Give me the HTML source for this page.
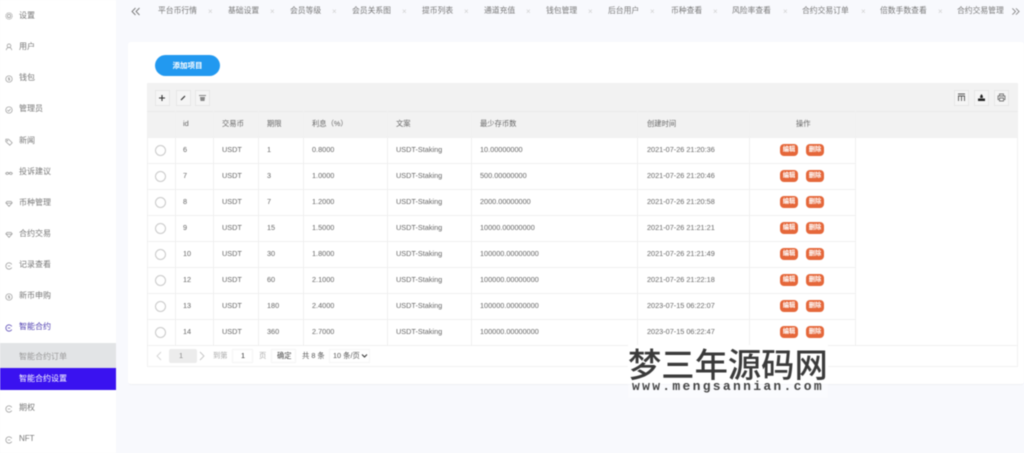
<!DOCTYPE html>
<html><head><meta charset="utf-8">
<style>
html,body{margin:0;padding:0;width:1024px;height:453px;overflow:hidden;background:#f8f9fd}
body{position:relative;font-family:"Liberation Sans","Noto Sans CJK SC",sans-serif;color:#666}
#w{position:absolute;left:0;top:0;width:1024px;height:453px;filter:blur(.4px)}
#w div,#w span,#w svg{position:absolute}
.t{font-size:7.3px;line-height:10px;white-space:nowrap;color:#666;margin-top:1px}
.m{font-size:8px;line-height:10px;white-space:nowrap;color:#777;left:19px}
.i{left:5px;width:8px;height:8px;margin-top:1px}
.tab{font-size:7.8px;line-height:10px;top:6px;white-space:nowrap;color:#777}
.x{font-size:8px;line-height:10px;top:7px;color:#d0d0d0}
.h{background:#f0f0f0;height:1px;left:147px;width:708px}
.v{background:#f0f0f0;width:1px;top:111px;height:234px}
.r{width:9px;height:9px;border:1px solid #c9c9c9;border-radius:50%;left:155px;background:#fff}
.b{background:#e5673a;border-radius:4px;width:18px;height:12px;color:#fff;font-size:6.3px;line-height:12px;text-align:center;font-weight:bold}
.tb{width:13px;height:14px;border:1px solid #e6e6e6;top:90px;background:#f5f5f5;box-sizing:content-box}
</style></head><body><div id="w">

<div style="left:0;top:0;width:116px;height:453px;background:#fff"></div>

<svg class="i" style="top:11px" viewBox="0 0 10 10" fill="none" stroke="#999" stroke-width=".9"><circle cx="5" cy="5" r="2"/><circle cx="5" cy="5" r="4" stroke-dasharray="1.6 .6"/></svg><div class="m" style="top:11px">设置</div>
<svg class="i" style="top:42px" viewBox="0 0 10 10" fill="none" stroke="#999" stroke-width=".9"><circle cx="5" cy="3.500" r="2.300"/><path d="M1.500 9c.3-2.500 1.500-3.300 3.500-3.300S8.200 6.500 8.500 9"/></svg><div class="m" style="top:42px">用户</div>
<svg class="i" style="top:74px" viewBox="0 0 10 10" fill="none" stroke="#999" stroke-width=".9"><circle cx="5" cy="5" r="4"/><path d="M6.200 3.500H4.300v1.500h1.500v1.500H3.900"/></svg><div class="m" style="top:73px">钱包</div>
<svg class="i" style="top:105px" viewBox="0 0 10 10" fill="none" stroke="#999" stroke-width=".9"><circle cx="5" cy="5" r="4"/><path d="M3 5l1.500 1.500L7 3.700"/></svg><div class="m" style="top:104px">管理员</div>
<svg class="i" style="top:137px" viewBox="0 0 10 10" fill="none" stroke="#999" stroke-width=".9"><path d="M1 1.500h3.500L9 6 6 9 1 4.500z"/><circle cx="3" cy="3.300" r=".5"/></svg><div class="m" style="top:136px">新闻</div>
<svg class="i" style="top:168px" viewBox="0 0 10 10" fill="none" stroke="#999" stroke-width="1"><path d="M.8 5.500c1-1.800 2.800-1.800 4.200 0 1.400 1.800 3.200 1.800 4.200 0-1-1.800-2.800-1.800-4.200 0-1.400 1.800-3.200 1.800-4.200 0z"/></svg><div class="m" style="top:167px">投诉建议</div>
<svg class="i" style="top:199px" viewBox="0 0 10 10" fill="none" stroke="#999" stroke-width=".9"><path d="M1 3.500l1.500-1.800h5L9 3.500 5 8z"/><path d="M1 4h8"/></svg><div class="m" style="top:198px">币种管理</div>
<svg class="i" style="top:230px" viewBox="0 0 10 10" fill="none" stroke="#999" stroke-width=".9"><path d="M1 3.500l1.500-1.800h5L9 3.500 5 8z"/><path d="M1 4h8"/></svg><div class="m" style="top:229px">合约交易</div>
<svg class="i" style="top:261px" viewBox="0 0 10 10" fill="none" stroke="#999" stroke-width=".9"><path d="M8.500 3A4 4 0 1 0 8.500 7"/><path d="M3.500 5h3"/></svg><div class="m" style="top:260px">记录查看</div>
<svg class="i" style="top:292px" viewBox="0 0 10 10" fill="none" stroke="#999" stroke-width=".9"><circle cx="5" cy="5" r="4"/><path d="M6.200 3.500H4.300v1.500h1.500v1.500H3.900"/></svg><div class="m" style="top:291px">新币申购</div>
<svg class="i" style="top:323px" viewBox="0 0 10 10" fill="none" stroke="#5a4bb5" stroke-width="1"><path d="M8.500 3A4 4 0 1 0 8.500 7"/><path d="M3.500 5h3"/></svg><div class="m" style="top:322px;color:#4f3fb0">智能合约</div>

<div style="left:0;top:343px;width:116px;height:25px;background:#e2e4e6"></div>
<div style="left:0;top:368px;width:116px;height:22px;background:#3a12f0"></div>
<div class="m" style="top:352px;color:#999">智能合约订单</div>
<div class="m" style="top:374px;color:#fff">智能合约设置</div>

<svg class="i" style="top:404px" viewBox="0 0 10 10" fill="none" stroke="#999" stroke-width=".9"><path d="M8.500 3A4 4 0 1 0 8.500 7"/><path d="M3.500 5h3"/></svg><div class="m" style="top:403px">期权</div>
<svg class="i" style="top:435px" viewBox="0 0 10 10" fill="none" stroke="#999" stroke-width=".9"><path d="M8.500 3A4 4 0 1 0 8.500 7"/><path d="M3.500 5h3"/></svg><div class="m" style="top:434px">NFT</div>

<svg style="left:131px;top:7px;width:10px;height:9px" viewBox="0 0 10 9" fill="none" stroke="#777" stroke-width=".9"><path d="M4.500 1L1 4.500 4.500 8M8.500 1L5 4.500 8.500 8"/></svg>
<div class="tab" style="left:158px">平台币行情</div><div class="x" style="left:208px">×</div>
<div class="tab" style="left:228px">基础设置</div><div class="x" style="left:270px">×</div>
<div class="tab" style="left:290px">会员等级</div><div class="x" style="left:332px">×</div>
<div class="tab" style="left:352px">会员关系图</div><div class="x" style="left:402px">×</div>
<div class="tab" style="left:422px">提币列表</div><div class="x" style="left:464px">×</div>
<div class="tab" style="left:484px">通道充值</div><div class="x" style="left:526px">×</div>
<div class="tab" style="left:546px">钱包管理</div><div class="x" style="left:588px">×</div>
<div class="tab" style="left:608px">后台用户</div><div class="x" style="left:650px">×</div>
<div class="tab" style="left:671px">币种查看</div><div class="x" style="left:713px">×</div>
<div class="tab" style="left:732px">风险率查看</div><div class="x" style="left:783px">×</div>
<div class="tab" style="left:802px">合约交易订单</div><div class="x" style="left:861px">×</div>
<div class="tab" style="left:880px">倍数手数查看</div><div class="x" style="left:938px">×</div>
<div class="tab" style="left:957px">合约交易管理</div>
<svg style="left:1011px;top:7px;width:9px;height:9px" viewBox="0 0 10 9" fill="none" stroke="#777" stroke-width=".9"><path d="M1.500 1L5 4.500 1.500 8M5.500 1L9 4.500 5.500 8"/></svg>

<div style="left:128px;top:42px;width:896px;height:342px;background:#fff;border-radius:3px;border-bottom:1px solid #eff0f4"></div>

<div style="left:155px;top:55px;width:65px;height:21px;border-radius:11px;background:#2299f0;color:#fff;font-size:7.500px;font-weight:bold;line-height:21px;text-align:center">添加项目</div>

<div style="left:147px;top:83px;width:871px;height:54px;background:#f2f2f2"></div>
<div style="left:147px;top:137px;width:871px;height:230px;border:1px solid #f2f2f2;border-top:0;box-sizing:border-box"></div>

<div class="tb" style="left:155px"></div>
<svg style="left:158px;top:94px;width:8px;height:8px" viewBox="0 0 8 8" stroke="#333" stroke-width="1.100"><path d="M4 1v6M1 4h6"/></svg>
<div class="tb" style="left:176px"></div>
<svg style="left:179px;top:94px;width:8px;height:8px" viewBox="0 0 8 8" stroke="#333" stroke-width="1.200"><path d="M2 6L6 2"/></svg>
<div class="tb" style="left:195px"></div>
<svg style="left:198px;top:94px;width:9px;height:8px" viewBox="0 0 9 8" fill="#888"><path d="M1 1h7v1H1zM2 3h5L6.500 7h-4z"/></svg>

<div class="tb" style="left:954px"></div>
<svg style="left:957px;top:93px;width:9px;height:9px" viewBox="0 0 9 9" fill="none" stroke="#555" stroke-width=".9"><path d="M1 1h7M1 3h7M1.500 3v5M4.500 3v5M7.500 3v5"/></svg>
<div class="tb" style="left:974px"></div>
<svg style="left:977px;top:93px;width:9px;height:9px" viewBox="0 0 9 9" fill="#222"><path d="M1 5.500h7V8H1zM3.200 5V3L4.500 1 5.800 3v2z"/></svg>
<div class="tb" style="left:994px"></div>
<svg style="left:997px;top:93px;width:9px;height:9px" viewBox="0 0 9 9" fill="none" stroke="#777" stroke-width=".9"><path d="M2.500 3V1h4v2M2.500 6.500H1V3h7v3.500H6.500M2.500 5h4v3h-4z"/></svg>

<div class="h" style="top:111px;width:871px;background:#eaeaea"></div>
<div class="h" style="top:137px;width:871px"></div><div class="h" style="top:163px"></div><div class="h" style="top:189px"></div><div class="h" style="top:215px"></div><div class="h" style="top:241px"></div><div class="h" style="top:267px"></div><div class="h" style="top:293px"></div><div class="h" style="top:319px"></div><div class="h" style="top:345px;width:871px"></div>
<div class="v" style="left:175px"></div><div class="v" style="left:213px"></div><div class="v" style="left:258px"></div><div class="v" style="left:303px"></div><div class="v" style="left:387px"></div><div class="v" style="left:471px"></div><div class="v" style="left:637px"></div><div class="v" style="left:749px"></div><div class="v" style="left:855px"></div>

<div class="t" style="left:183px;top:118px">id</div><div class="t" style="left:222px;top:118px">交易币</div><div class="t" style="left:267px;top:118px">期限</div><div class="t" style="left:312px;top:118px">利息（%）</div><div class="t" style="left:396px;top:118px">文案</div><div class="t" style="left:480px;top:118px">最少存币数</div><div class="t" style="left:647px;top:118px">创建时间</div><div class="t" style="left:796px;top:118px">操作</div>

<div class="r" style="top:145px"></div><div class="t" style="left:183px;top:144px">6</div><div class="t" style="left:222px;top:144px">USDT</div><div class="t" style="left:267px;top:144px">1</div><div class="t" style="left:312px;top:144px">0.8000</div><div class="t" style="left:396px;top:144px">USDT-Staking</div><div class="t" style="left:480px;top:144px">10.00000000</div><div class="t" style="left:647px;top:144px">2021-07-26 21:20:36</div><div class="b" style="left:780px;top:144px">编辑</div><div class="b" style="left:806px;top:144px">删除</div>

<div class="r" style="top:171px"></div><div class="t" style="left:183px;top:170px">7</div><div class="t" style="left:222px;top:170px">USDT</div><div class="t" style="left:267px;top:170px">3</div><div class="t" style="left:312px;top:170px">1.0000</div><div class="t" style="left:396px;top:170px">USDT-Staking</div><div class="t" style="left:480px;top:170px">500.00000000</div><div class="t" style="left:647px;top:170px">2021-07-26 21:20:46</div><div class="b" style="left:780px;top:170px">编辑</div><div class="b" style="left:806px;top:170px">删除</div>

<div class="r" style="top:197px"></div><div class="t" style="left:183px;top:196px">8</div><div class="t" style="left:222px;top:196px">USDT</div><div class="t" style="left:267px;top:196px">7</div><div class="t" style="left:312px;top:196px">1.2000</div><div class="t" style="left:396px;top:196px">USDT-Staking</div><div class="t" style="left:480px;top:196px">2000.00000000</div><div class="t" style="left:647px;top:196px">2021-07-26 21:20:58</div><div class="b" style="left:780px;top:196px">编辑</div><div class="b" style="left:806px;top:196px">删除</div>

<div class="r" style="top:223px"></div><div class="t" style="left:183px;top:222px">9</div><div class="t" style="left:222px;top:222px">USDT</div><div class="t" style="left:267px;top:222px">15</div><div class="t" style="left:312px;top:222px">1.5000</div><div class="t" style="left:396px;top:222px">USDT-Staking</div><div class="t" style="left:480px;top:222px">10000.00000000</div><div class="t" style="left:647px;top:222px">2021-07-26 21:21:21</div><div class="b" style="left:780px;top:222px">编辑</div><div class="b" style="left:806px;top:222px">删除</div>

<div class="r" style="top:249px"></div><div class="t" style="left:183px;top:248px">10</div><div class="t" style="left:222px;top:248px">USDT</div><div class="t" style="left:267px;top:248px">30</div><div class="t" style="left:312px;top:248px">1.8000</div><div class="t" style="left:396px;top:248px">USDT-Staking</div><div class="t" style="left:480px;top:248px">100000.00000000</div><div class="t" style="left:647px;top:248px">2021-07-26 21:21:49</div><div class="b" style="left:780px;top:248px">编辑</div><div class="b" style="left:806px;top:248px">删除</div>

<div class="r" style="top:275px"></div><div class="t" style="left:183px;top:274px">12</div><div class="t" style="left:222px;top:274px">USDT</div><div class="t" style="left:267px;top:274px">60</div><div class="t" style="left:312px;top:274px">2.1000</div><div class="t" style="left:396px;top:274px">USDT-Staking</div><div class="t" style="left:480px;top:274px">100000.00000000</div><div class="t" style="left:647px;top:274px">2021-07-26 21:22:18</div><div class="b" style="left:780px;top:274px">编辑</div><div class="b" style="left:806px;top:274px">删除</div>

<div class="r" style="top:301px"></div><div class="t" style="left:183px;top:300px">13</div><div class="t" style="left:222px;top:300px">USDT</div><div class="t" style="left:267px;top:300px">180</div><div class="t" style="left:312px;top:300px">2.4000</div><div class="t" style="left:396px;top:300px">USDT-Staking</div><div class="t" style="left:480px;top:300px">100000.00000000</div><div class="t" style="left:647px;top:300px">2023-07-15 06:22:07</div><div class="b" style="left:780px;top:300px">编辑</div><div class="b" style="left:806px;top:300px">删除</div>

<div class="r" style="top:327px"></div><div class="t" style="left:183px;top:326px">14</div><div class="t" style="left:222px;top:326px">USDT</div><div class="t" style="left:267px;top:326px">360</div><div class="t" style="left:312px;top:326px">2.7000</div><div class="t" style="left:396px;top:326px">USDT-Staking</div><div class="t" style="left:480px;top:326px">100000.00000000</div><div class="t" style="left:647px;top:326px">2023-07-15 06:22:47</div><div class="b" style="left:780px;top:326px">编辑</div><div class="b" style="left:806px;top:326px">删除</div>

<svg style="left:155px;top:351px;width:8px;height:10px" viewBox="0 0 8 10" fill="none" stroke="#d4d4d4" stroke-width=".9"><path d="M6 1L2 5l4 4"/></svg>
<div style="left:169px;top:349px;width:28px;height:14px;background:#ececec;border-radius:2px"></div>
<div class="t" style="left:179px;top:350px;color:#888">1</div>
<svg style="left:198px;top:351px;width:8px;height:10px" viewBox="0 0 8 10" fill="none" stroke="#c4c4c4" stroke-width=".9"><path d="M2 1l4 4-4 4"/></svg>
<div class="t" style="left:213px;top:350px;color:#aaa">到第</div>
<div style="left:232px;top:349px;width:21px;height:14px;border:1px solid #f4f4f4;box-sizing:border-box"></div>
<div class="t" style="left:241px;top:350px;color:#333">1</div>
<div class="t" style="left:259px;top:350px;color:#aaa">页</div>
<div style="left:271px;top:349px;width:25px;height:14px;border:1px solid #f4f4f4;box-sizing:border-box"></div>
<div class="t" style="left:277px;top:350px;color:#444">确定</div>
<div class="t" style="left:302px;top:350px;color:#555">共 8 条</div>
<div style="left:329px;top:349px;width:41px;height:14px;border:1px solid #f6f6f6;box-sizing:border-box"></div>
<div class="t" style="left:333px;top:350px;color:#555">10 条/页</div>
<svg style="left:361px;top:353px;width:7px;height:6px" viewBox="0 0 7 6" fill="none" stroke="#333" stroke-width="1"><path d="M1 1.500l2.500 2.500L6 1.500"/></svg>

<div style="left:628px;top:345px;width:200px;height:39px;background:#fff"></div>
<div style="left:628px;top:384px;width:200px;height:14px;background:#fff;opacity:.35"></div>
<div style="left:628px;top:345px;font-family:'Noto Sans CJK SC',sans-serif;font-size:33.300px;line-height:36px;color:#3a3a3a;white-space:nowrap;font-weight:500">梦三年源码网</div>
<div style="left:632px;top:379px;font-family:'Liberation Mono',monospace;font-size:13px;line-height:15px;font-weight:bold;color:#444;white-space:nowrap;letter-spacing:2.300px">www.mengsannian.com</div>

</div></body></html>
